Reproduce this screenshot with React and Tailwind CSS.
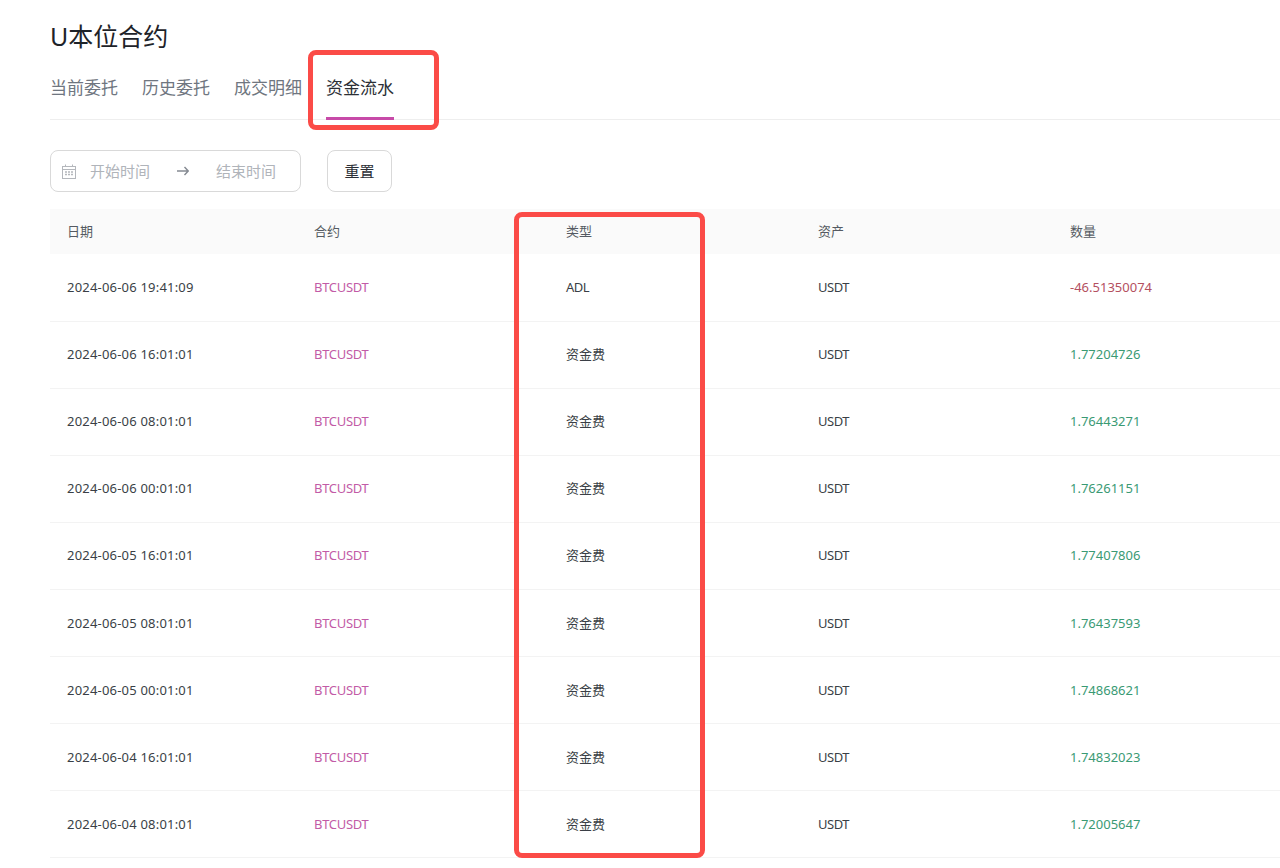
const rows = [
  ["2024-06-06 19:41:09", "ADL", "-46.51350074"],
  ["2024-06-06 16:01:01", "资金费", "1.77204726"],
  ["2024-06-06 08:01:01", "资金费", "1.76443271"],
  ["2024-06-06 00:01:01", "资金费", "1.76261151"],
  ["2024-06-05 16:01:01", "资金费", "1.77407806"],
  ["2024-06-05 08:01:01", "资金费", "1.76437593"],
  ["2024-06-05 00:01:01", "资金费", "1.74868621"],
  ["2024-06-04 16:01:01", "资金费", "1.74832023"],
  ["2024-06-04 08:01:01", "资金费", "1.72005647"],
];

const tabs = ["当前委托", "历史委托", "成交明细"];
const cols = "grid grid-cols-[247px_252px_252px_252px_1fr] items-center";

const CalendarIcon = () => (
  <svg width="14" height="15" viewBox="0 0 14 15" fill="none" stroke="#b4b7bc" strokeWidth="1">
    <rect x="0.5" y="2.5" width="13" height="12" />
    <path d="M0.5 5.5H13.5M3.5 0.5V3M10.5 0.5V3" />
    <path d="M3 8H5M6 8H8M9 8H11M3 10.5H5M6 10.5H8M9 10.5H11" strokeWidth="1.5" />
  </svg>
);

const ArrowIcon = () => (
  <svg width="12" height="10" viewBox="0 0 12 10" fill="none" stroke="#858a92" strokeWidth="1.4">
    <path d="M0 5H11M7.5 1L11.2 5L7.5 9" />
  </svg>
);

const App = () => {
  return (
    <div className="relative h-[868px] w-[1280px] overflow-hidden bg-white pl-[50px] font-['Noto_Sans','Noto_Sans_CJK_SC',sans-serif] text-[#2b2f36]">
      <h1 className="pt-[20px] text-[25px] leading-[32px] font-normal text-[#1e2329]">U本位合约</h1>

      <div className="mt-[12px] flex h-[56px] gap-[24px] border-b border-[#eeeeee] text-[17px] leading-[24px] text-[#6f7680]">
        {tabs.map((tab) => (
          <div key={tab} className="pt-[12px]">{tab}</div>
        ))}
        <div className="h-[56px] border-b-[3px] border-[#c74aa8] pt-[12px] text-[#2b2f36]">资金流水</div>
      </div>

      <div className="mt-[30px] flex gap-[26px]">
        <div className="flex h-[42px] w-[251px] items-center rounded-lg border border-[#d9d9d9] pl-[11px] text-[15px] text-[#b0b4ba]">
          <CalendarIcon />
          <span className="ml-[14px]">开始时间</span>
          <span className="ml-[27px]"><ArrowIcon /></span>
          <span className="ml-[27px]">结束时间</span>
        </div>
        <button className="h-[42px] w-[65px] rounded-lg border border-[#d9d9d9] text-[15px] text-[#2b2f36]">重置</button>
      </div>

      <div className={`${cols} mt-[17px] h-[45px] bg-[#fafafa] pl-[17px] text-[13px] text-[#555a62]`}>
        <div>日期</div>
        <div>合约</div>
        <div>类型</div>
        <div>资产</div>
        <div>数量</div>
      </div>

      <div className="pt-[1px]">
        {rows.map(([date, type, amount]) => (
          <div key={date} className={`${cols} h-[67.05px] border-b border-[#f3f3f3] pl-[17px] text-[13px] text-[#3a3f46]`}>
            <div className="tracking-[0.2px]">{date}</div>
            <div className="tracking-[-0.3px] text-[#c25ba6]">BTCUSDT</div>
            <div className={type === "ADL" ? "tracking-[-0.5px]" : ""}>{type}</div>
            <div className="tracking-[-0.5px]">USDT</div>
            <div className={amount.startsWith("-") ? "text-[#b4505f]" : "text-[#3a9a74]"}>{amount}</div>
          </div>
        ))}
      </div>

      <div className="absolute top-[50px] left-[308px] h-[80px] w-[131px] rounded-lg border-[5px] border-[#fb4b47]" />
      <div className="absolute top-[212px] left-[514px] h-[646px] w-[191px] rounded-lg border-[5px] border-[#fb4b47]" />
    </div>
  );
};

export default App;
